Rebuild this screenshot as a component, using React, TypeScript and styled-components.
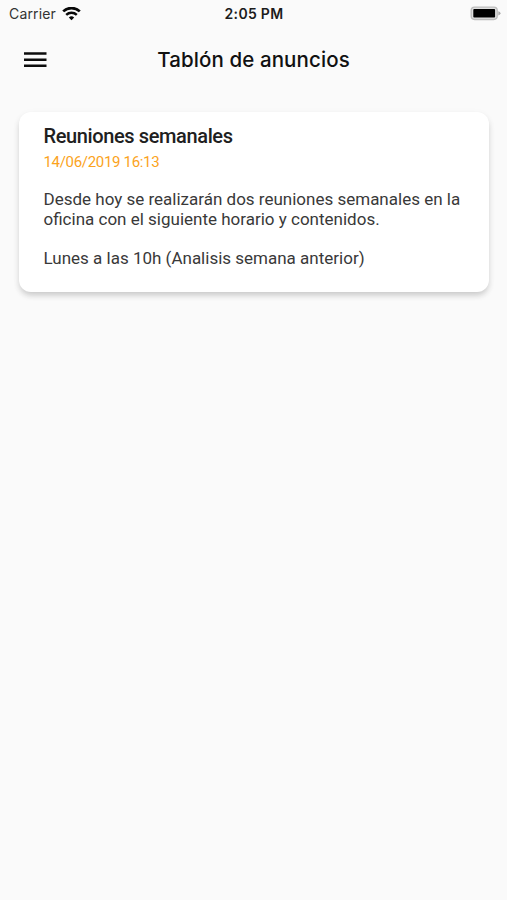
import React from "react";
import styled, { createGlobalStyle } from "styled-components";

const GlobalStyle = createGlobalStyle`
  * { box-sizing: border-box; }
  html, body { margin: 0; background: #fafafa; }
`;

const Screen = styled.div`
  min-height: 900px;
  display: flex;
  flex-direction: column;
  background: #fafafa;
  font-family: Roboto, sans-serif;
  color: #202020;
`;

const StatusBar = styled.header`
  height: 27px;
  padding: 0 6px 0 9px;
  display: grid;
  grid-template-columns: 1fr auto 1fr;
  align-items: center;
  font-family: Inter, sans-serif;
  font-size: 14px;
  line-height: 27px;
`;

const Carrier = styled.div`
  display: flex;
  align-items: center;
  gap: 6px;
  color: #333;
  letter-spacing: 0.15px;
`;

const Clock = styled.time`
  margin-right: 2px;
  font-weight: 600;
  letter-spacing: 0.3px;
  color: #1c1c1c;
`;

const BatterySlot = styled.div`
  display: flex;
  justify-content: flex-end;
`;

const AppBar = styled.nav`
  height: 66px;
  padding: 0 24px;
  display: grid;
  grid-template-columns: 23px 1fr 23px;
  align-items: center;
`;

const MenuButton = styled.button`
  display: flex;
  padding: 0;
  border: 0;
  background: none;
`;

const Title = styled.h1`
  margin: 0;
  text-align: center;
  font-family: Inter, sans-serif;
  font-size: 20.5px;
  font-weight: 450;
  letter-spacing: 0.1px;
  line-height: 26px;
  color: #111;
`;

const Card = styled.article`
  height: 179.5px;
  margin: 19px 18px 0 19px;
  padding: 12px 24px;
  border-radius: 12px;
  background: #fff;
  box-shadow: 0 4px 6px -1px rgba(0, 0, 0, 0.19), 0 2px 10px rgba(0, 0, 0, 0.035);
`;

const Heading = styled.h2`
  margin: 0 0 0 0.5px;
  font-size: 20px;
  font-weight: 500;
  letter-spacing: -0.38px;
  line-height: 24px;
`;

const PostedAt = styled.time`
  display: block;
  margin: 4px 0 0 0.5px;
  font-size: 15px;
  letter-spacing: -0.32px;
  line-height: 20px;
  color: #fba31c;
`;

const Message = styled.p`
  margin: 18px 0 0 0.5px;
  font-size: 17px;
  line-height: 19.5px;
  white-space: pre-line;
  color: #393939;
`;

const WifiIcon = () => (
  <svg width="19" height="14" viewBox="0 0 19 14" fill="none" stroke="#080808">
    <path d="M1.2 4.4a12 12 0 0 1 16.6 0" strokeWidth="2.7" />
    <path d="M4.2 7.9a7.6 7.6 0 0 1 10.6 0" strokeWidth="2.4" />
    <path d="M6.8 10.5a4 4 0 0 1 5.4 0L9.5 13.3z" fill="#080808" stroke="none" />
  </svg>
);

const BatteryIcon = () => (
  <svg width="31" height="15" viewBox="0 0 31 15">
    <rect x="1.2" y="1.1" width="26" height="12.4" rx="3.4" fill="#e0e0e0" stroke="#bdbdbd" strokeWidth="1.4" />
    <rect x="3.3" y="3.1" width="21.8" height="8.4" rx="0.8" fill="#000" />
    <path d="M28.3 5.2q2.2.6 2.2 2.1t-2.2 2.1z" fill="#aaa" />
  </svg>
);

const MenuIcon = () => (
  <svg width="23" height="16" viewBox="0 0 23 16" stroke="#0c0c0c" strokeWidth="2.5">
    <path d="M0 1.6h22.5M0 7.7h22.5M0 13.7h22.5" />
  </svg>
);

export default function App() {
  return (
    <Screen>
      <GlobalStyle />
      <StatusBar>
        <Carrier>Carrier <WifiIcon /></Carrier>
        <Clock>2:05 PM</Clock>
        <BatterySlot><BatteryIcon /></BatterySlot>
      </StatusBar>
      <AppBar>
        <MenuButton aria-label="Menú"><MenuIcon /></MenuButton>
        <Title>Tablón de anuncios</Title>
      </AppBar>
      <Card>
        <Heading>Reuniones semanales</Heading>
        <PostedAt>14/06/2019 16:13</PostedAt>
        <Message>
          {"Desde hoy se realizarán dos reuniones semanales en la oficina con el siguiente horario y contenidos.\n\nLunes a las 10h (Analisis semana anterior)"}
        </Message>
      </Card>
    </Screen>
  );
}
